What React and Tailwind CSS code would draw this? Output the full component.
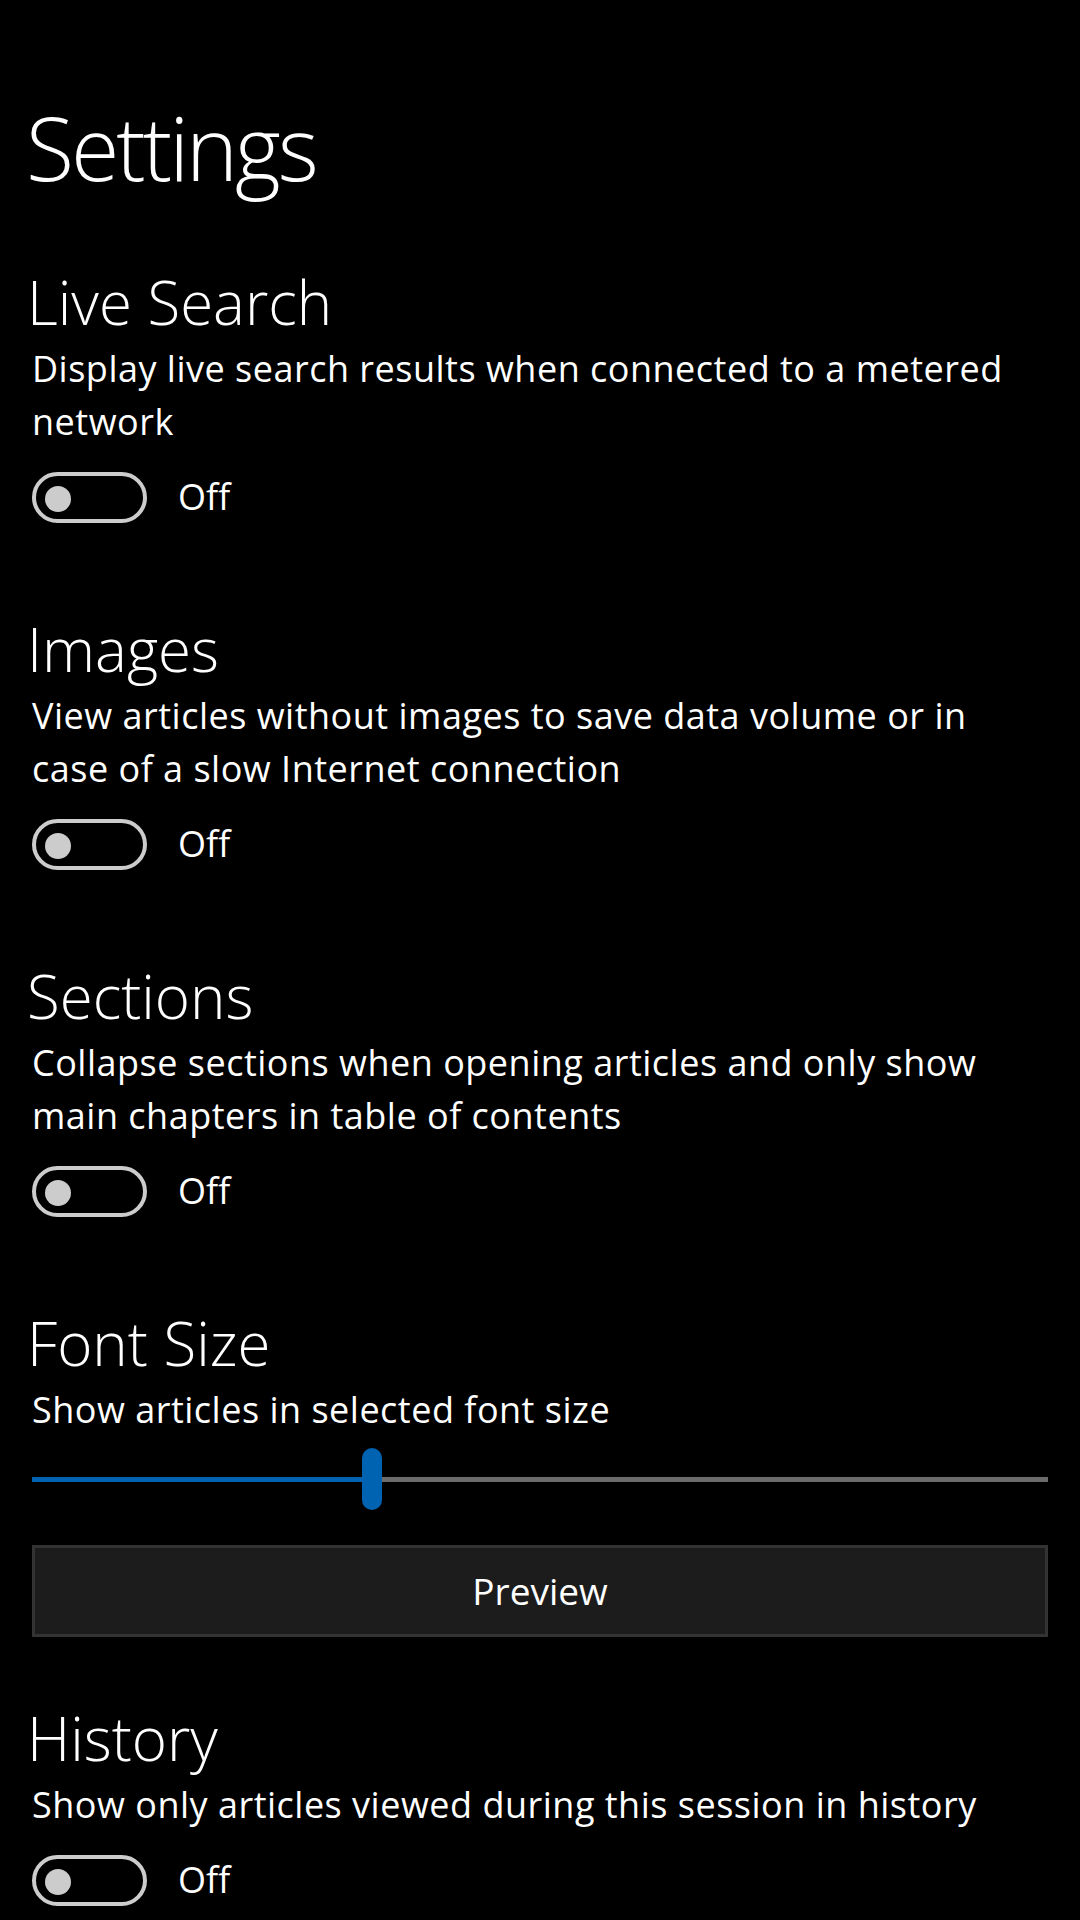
import { useState } from 'react'

const font = { fontFamily: '"Open Sans", "Noto Sans", sans-serif' }

function Toggle({ on, onChange }) {
  return (
    <div className="flex items-center mt-[23px]">
      <button
        type="button"
        onClick={onChange}
        className={
          'relative w-[115px] h-[51px] rounded-full border-[4px] ' +
          (on ? 'bg-[#0063b1] border-[#0063b1]' : 'border-[#cccccc]')
        }
      >
        <span
          className={
            'absolute top-[9.5px] w-[26px] h-[26px] rounded-full ' +
            (on ? 'left-[71px] bg-white' : 'left-[9px] bg-[#cccccc]')
          }
        />
      </button>
      <span className="ml-[31px] text-[36px] leading-[51px] text-white pb-[2px]">{on ? 'On' : 'Off'}</span>
    </div>
  )
}

function Section({ title, desc, children, className = '' }) {
  return (
    <section className={className}>
      <h2 className="text-[60px] leading-[70px] font-light text-white -ml-[5px]">{title}</h2>
      <p className="mt-[5px] text-[36px] leading-[53px] tracking-[0.5px] text-white">{desc}</p>
      {children}
    </section>
  )
}

export default function App() {
  const [live, setLive] = useState(false)
  const [images, setImages] = useState(false)
  const [sections, setSections] = useState(false)
  const [history, setHistory] = useState(false)
  const [size, setSize] = useState(33.5)

  return (
    <div className="w-[1080px] h-[1920px] overflow-hidden bg-black text-white pt-[97px] pl-[32px] pr-[32px]" style={font}>
      <h1 className="text-[88px] leading-[100px] font-light tracking-[-3px] -ml-[6px]">Settings</h1>

      <Section
        className="mt-[70px]"
        title="Live Search"
        desc={<>Display live search results when connected to a metered<br />network</>}
      >
        <Toggle on={live} onChange={() => setLive(!live)} />
      </Section>

      <Section
        className="mt-[90px]"
        title="Images"
        desc={<>View articles without images to save data volume or in<br />case of a slow Internet connection</>}
      >
        <Toggle on={images} onChange={() => setImages(!images)} />
      </Section>

      <Section
        className="mt-[90px]"
        title="Sections"
        desc={<>Collapse sections when opening articles and only show<br />main chapters in table of contents</>}
      >
        <Toggle on={sections} onChange={() => setSections(!sections)} />
      </Section>

      <Section className="mt-[90px]" title="Font Size" desc="Show articles in selected font size">
        <div className="relative mt-[12px] h-[62px] flex items-center">
          <div className="h-[5px] bg-[#0063b1]" style={{ width: size + '%' }} />
          <div className="h-[5px] flex-1 bg-[#6b6b6b]" />
          <div
            className="absolute top-0 w-[20px] h-[62px] rounded-full bg-[#0063b1] -ml-[10px]"
            style={{ left: size + '%' }}
          />
          <input
            type="range"
            min="0"
            max="100"
            value={size}
            onChange={(e) => setSize(Number(e.target.value))}
            className="absolute inset-0 w-full opacity-0 cursor-pointer"
          />
        </div>
        <button
          type="button"
          className="mt-[35px] w-full h-[92px] bg-[#1c1c1c] border-[3px] border-[#333333] text-[37px] text-white"
        >
          Preview
        </button>
      </Section>

      <Section
        className="mt-[66px]"
        title="History"
        desc="Show only articles viewed during this session in history"
      >
        <Toggle on={history} onChange={() => setHistory(!history)} />
      </Section>
    </div>
  )
}
